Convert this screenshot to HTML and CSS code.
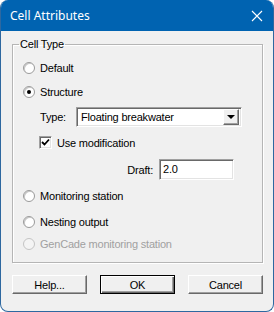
FILE: index.html
```html
<!DOCTYPE html>
<html lang="en">
<head>
<meta charset="UTF-8">
<title>Cell Attributes</title>
<link rel="stylesheet" href="styles.css">
</head>
<body>
  <div class="window">
    <div class="titlebar">
      <span class="title">Cell Attributes</span>
      <svg class="close" width="12" height="12" viewBox="0 0 12 12">
        <path d="M1 1 L11 11 M11 1 L1 11" stroke="#fff" stroke-width="1.1" fill="none"/>
      </svg>
    </div>
    <div class="content">
      <fieldset class="group">
        <legend>Cell Type</legend>
        <div class="opt opt-default"><span class="radio"></span>Default</div>
        <div class="opt opt-structure"><span class="radio checked"></span>Structure</div>
        <div class="type-row">
          <span class="type-label">Type:</span>
          <div class="combo">
            <span class="combo-text">Floating breakwater</span>
            <span class="combo-btn"><span class="arrow"></span></span>
          </div>
        </div>
        <div class="check-row"><span class="checkbox">
          <svg width="9" height="9" viewBox="0 0 9 9"><path d="M1 4 L3.5 6.5 L8 1.5" stroke="#000" stroke-width="1.8" fill="none"/></svg>
        </span>Use modification</div>
        <div class="draft-row">
          <span class="draft-label">Draft:</span>
          <div class="textbox">2.0</div>
        </div>
        <div class="opt opt-monitor"><span class="radio"></span>Monitoring station</div>
        <div class="opt opt-nesting"><span class="radio"></span>Nesting output</div>
        <div class="opt opt-gencade disabled"><span class="radio"></span>GenCade monitoring station</div>
      </fieldset>
      <div class="buttons">
        <div class="btn">Help...</div>
        <div class="btn default">OK</div>
        <div class="btn">Cancel</div>
      </div>
    </div>
  </div>
</body>
</html>
```

FILE: styles.css
```css
body {
  margin: 0;
  background: #fff;
  font-family: "Liberation Sans", Arial, sans-serif;
  font-size: 11px;
  letter-spacing: -0.2px;
  color: #000;
}

.window {
  width: 274px;
  height: 312px;
  box-sizing: border-box;
  background: #f0f0f0;
  border: 1px solid #2e68a0;
  border-top: none;
  border-radius: 8px;
  overflow: hidden;
}

.titlebar {
  height: 31px;
  background: #0063b1;
  display: flex;
  align-items: center;
  justify-content: space-between;
  padding: 0 10px 0 9px;
}

.title {
  color: #fff;
  font-family: "Noto Sans", sans-serif;
  font-size: 12px;
  letter-spacing: 0;
}

.content {
  padding: 7px 10px 0 11px;
}

.group {
  margin: 0;
  padding: 0;
  height: 225px;
  box-sizing: border-box;
  border: 1px solid #b5b5b5;
  box-shadow: inset 1px 1px #fff, 1px 1px #fff;
  min-width: 0;
}

.group legend {
  margin-left: 6px;
  padding: 0 1px;
  line-height: 13px;
}

.opt {
  display: flex;
  align-items: center;
  height: 14px;
  padding-left: 10px;
}

.opt-default { margin-top: 10px; }
.opt-structure { margin-top: 10px; }
.opt-monitor { margin-top: 9px; }
.opt-nesting { margin-top: 12px; }
.opt-gencade { margin-top: 8px; }

.radio {
  width: 10px;
  height: 10px;
  border-radius: 50%;
  background: #fff;
  border: 1px solid #9a9a9a;
  box-shadow: inset 1px 1px #c8c8c8;
  margin-right: 5px;
  position: relative;
  flex: none;
}

.radio.checked::after {
  content: "";
  position: absolute;
  left: 3px;
  top: 3px;
  width: 4px;
  height: 4px;
  border-radius: 50%;
  background: #000;
}

.disabled {
  color: #a0a0a0;
}

.disabled .radio {
  border-color: #c4c4c4;
  background: #f4f4f4;
  box-shadow: none;
}

.type-row {
  display: flex;
  align-items: center;
  margin-top: 8px;
  padding-left: 27px;
}

.type-label {
  width: 36px;
}

.combo {
  width: 166px;
  height: 20px;
  box-sizing: border-box;
  background: #fff;
  border: 1px solid;
  border-color: #a0a0a0 #fff #fff #a0a0a0;
  box-shadow: inset 1px 1px #696969, inset -1px -1px #e3e3e3;
  display: flex;
  align-items: center;
  justify-content: space-between;
  padding: 2px;
}

.combo-text {
  padding-left: 2px;
}

.combo-btn {
  width: 16px;
  height: 16px;
  box-sizing: border-box;
  background: #f0f0f0;
  border: 1px solid;
  border-color: #fff #696969 #696969 #fff;
  box-shadow: inset -1px -1px #a0a0a0;
  display: flex;
  align-items: center;
  justify-content: center;
}

.arrow {
  width: 0;
  height: 0;
  border-left: 4px solid transparent;
  border-right: 4px solid transparent;
  border-top: 4px solid #000;
}

.check-row {
  display: flex;
  align-items: center;
  margin-top: 9px;
  padding-left: 26px;
}

.checkbox {
  width: 13px;
  height: 13px;
  box-sizing: border-box;
  background: #fff;
  border: 1px solid;
  border-color: #a0a0a0 #fff #fff #a0a0a0;
  box-shadow: inset 1px 1px #696969, inset -1px -1px #e3e3e3;
  display: flex;
  align-items: center;
  justify-content: center;
  margin-right: 5px;
}

.draft-row {
  display: flex;
  align-items: center;
  justify-content: flex-end;
  margin-top: 10px;
  padding-right: 28px;
}

.draft-label {
  margin-right: 6px;
}

.textbox {
  width: 75px;
  height: 21px;
  box-sizing: border-box;
  background: #fff;
  border: 1px solid;
  border-color: #a0a0a0 #fff #fff #a0a0a0;
  box-shadow: inset 1px 1px #696969, inset -1px -1px #e3e3e3;
  padding: 3px 3px;
  line-height: 13px;
}

.buttons {
  display: flex;
  justify-content: space-between;
  margin-top: 12px;
}

.btn {
  width: 75px;
  height: 19px;
  box-sizing: border-box;
  border: 1px solid;
  border-color: #fff #696969 #696969 #fff;
  box-shadow: inset -1px -1px #a0a0a0;
  background: #f0f0f0;
  display: flex;
  align-items: center;
  justify-content: center;
}

.btn.default {
  border: 1px solid #000;
  box-shadow: inset 1px 1px #fff, inset -1px -1px #696969, inset -2px -2px #a0a0a0;
}
```
